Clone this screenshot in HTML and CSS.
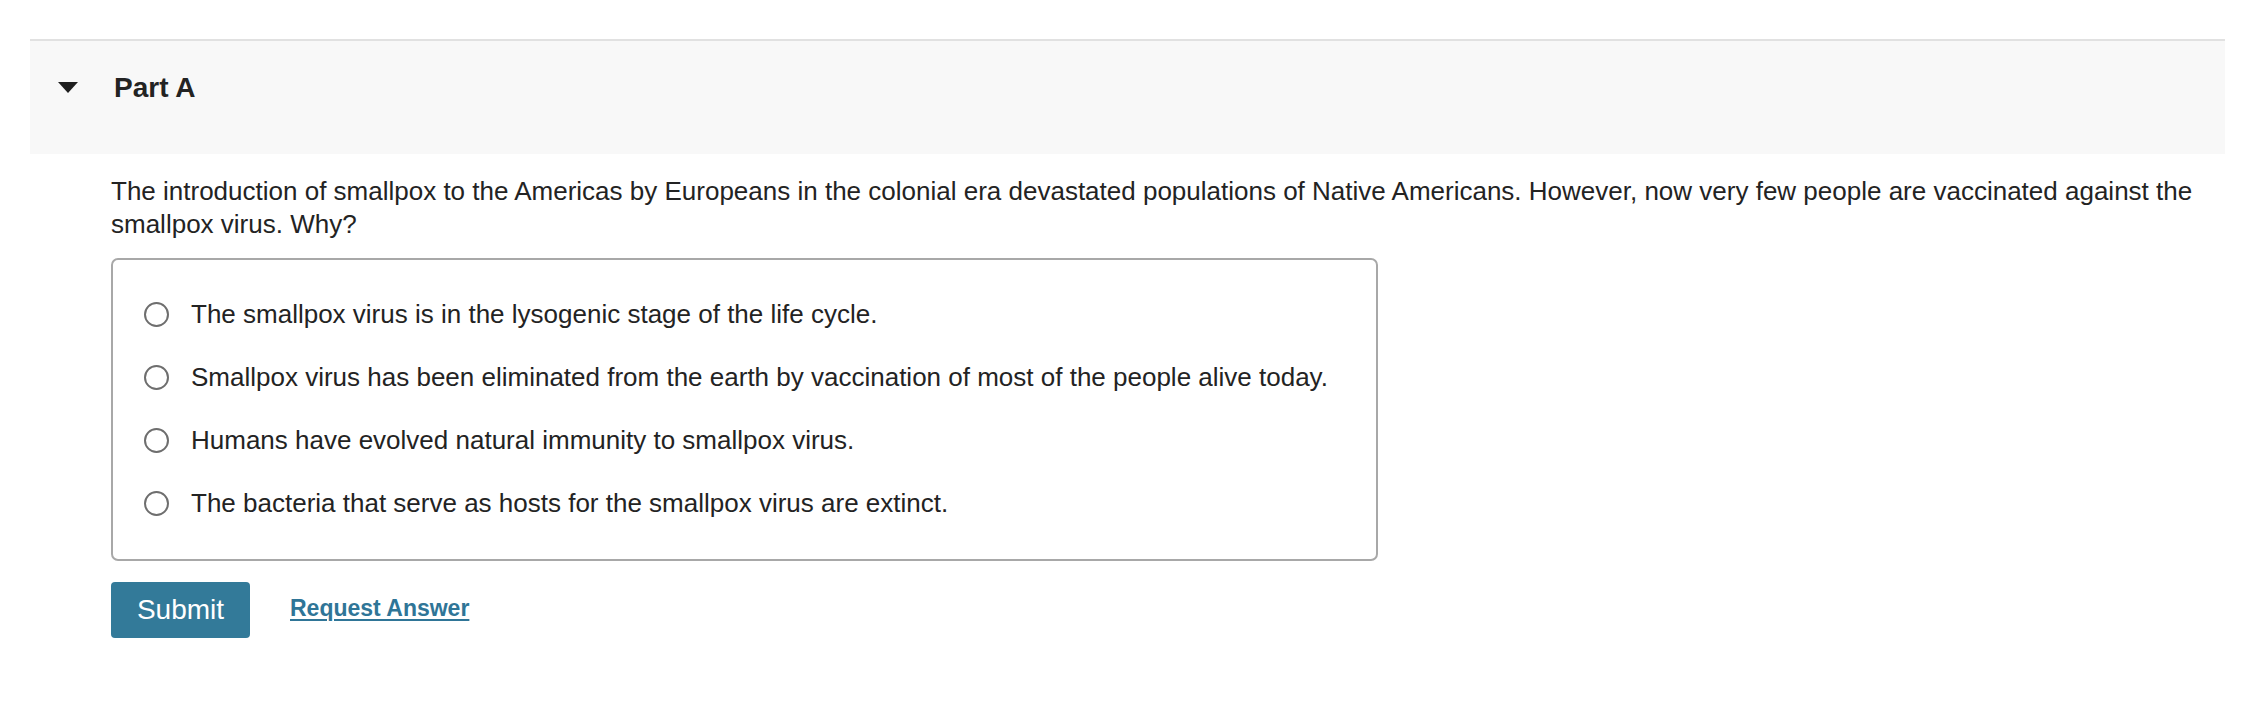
FILE: index.html
```html
<!DOCTYPE html>
<html lang="en">
<head>
<meta charset="utf-8">
<title>Part A</title>
<link rel="stylesheet" href="styles.css">
</head>
<body>
<div class="page">
  <section class="part">
    <header class="part-header">
      <span class="caret" aria-hidden="true"></span>
      <h2 class="part-title">Part A</h2>
    </header>
    <div class="part-body">
      <p class="question">The introduction of smallpox to the Americas by Europeans in the colonial era devastated populations of Native Americans. However, now very few people are vaccinated against the smallpox virus. Why?</p>
      <div class="choices">
        <label class="choice"><span class="radio"></span><span class="choice-text">The smallpox virus is in the lysogenic stage of the life cycle.</span></label>
        <label class="choice"><span class="radio"></span><span class="choice-text">Smallpox virus has been eliminated from the earth by vaccination of most of the people alive today.</span></label>
        <label class="choice"><span class="radio"></span><span class="choice-text">Humans have evolved natural immunity to smallpox virus.</span></label>
        <label class="choice"><span class="radio"></span><span class="choice-text">The bacteria that serve as hosts for the smallpox virus are extinct.</span></label>
      </div>
      <div class="actions">
        <button class="submit" type="button">Submit</button>
        <a class="request" href="#">Request Answer</a>
      </div>
    </div>
  </section>
</div>
</body>
</html>
```

FILE: styles.css
```css
html, body {
  margin: 0;
  padding: 0;
  background: #ffffff;
}
body {
  font-family: "Liberation Sans", Arial, Helvetica, sans-serif;
  color: #232323;
}
.page {
  padding: 39px 33px 0 30px;
}
.part {
  border-top: 2px solid #e1e1e1;
}
.part-header {
  display: flex;
  align-items: center;
  height: 113px;
  background: #f8f8f8;
  padding: 31px 0 0 28px;
  box-sizing: border-box;
  align-content: flex-start;
  flex-wrap: wrap;
}
.caret {
  width: 0;
  height: 0;
  border-left: 10.5px solid transparent;
  border-right: 10.5px solid transparent;
  border-top: 11px solid #1f1f1f;
  margin-top: -2px;
}
.part-title {
  margin: 0 0 0 36px;
  font-size: 28px;
  line-height: 32px;
  font-weight: bold;
  color: #232323;
}
.part-body {
  padding: 21px 20px 0 81px;
}
.question {
  margin: 0;
  font-size: 26px;
  line-height: 33px;
  color: #232323;
}
.choices {
  margin-top: 17px;
  width: 1267px;
  box-sizing: border-box;
  border: 2px solid #a8a8a8;
  border-radius: 7px;
  padding: 38px 0 40px 31px;
  display: flex;
  flex-direction: column;
  gap: 31px;
}
.choice {
  display: flex;
  align-items: center;
  font-size: 26px;
  line-height: 32px;
  color: #232323;
}
.radio {
  width: 25px;
  height: 25px;
  border: 2px solid #6e6e6e;
  border-radius: 50%;
  box-sizing: border-box;
  flex: none;
  margin-right: 22px;
}
.actions {
  display: flex;
  align-items: center;
  margin-top: 21px;
}
.submit {
  width: 139px;
  height: 56px;
  background: #337a99;
  color: #ffffff;
  border: none;
  border-radius: 4px;
  font-family: "Liberation Sans", Arial, sans-serif;
  font-size: 28px;
  padding: 0;
}
.request {
  margin-left: 40px;
  color: #2f7597;
  font-weight: bold;
  font-size: 23px;
  text-decoration: underline;
  text-decoration-thickness: 2px;
  text-underline-offset: 3px;
  margin-top: -4px;
}
```
